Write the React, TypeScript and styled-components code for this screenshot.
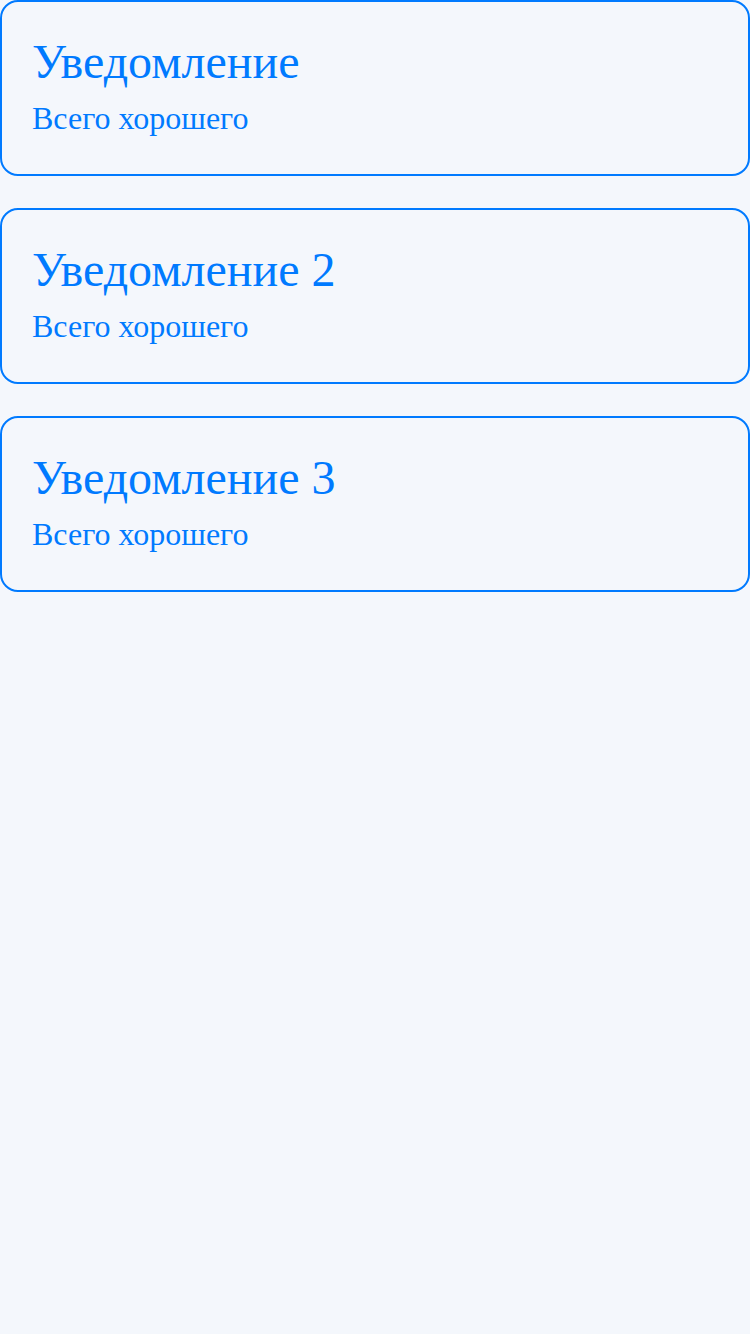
import React from "react";
import styled, { createGlobalStyle } from "styled-components";

const GlobalStyle = createGlobalStyle`
  html, body {
    margin: 0;
    padding: 0;
    background: #f4f7fc;
  }
  body {
    font-family: "Liberation Serif", "Times New Roman", serif;
    min-height: 1334px;
  }
`;

const List = styled.div`
  display: flex;
  flex-direction: column;
  gap: 32px;
  width: 750px;
`;

const Card = styled.div`
  box-sizing: border-box;
  height: 176px;
  border: 2px solid #007aff;
  border-radius: 18px;
  padding: 33px 30px 0;
  display: flex;
  flex-direction: column;
  gap: 13px;
`;

const Title = styled.h2`
  margin: 0;
  font-family: "Liberation Serif", "Times New Roman", serif;
  font-weight: 400;
  font-size: 48px;
  line-height: 53px;
  color: #007aff;
`;

const Text = styled.p`
  margin: 0;
  font-family: "Liberation Serif", "Times New Roman", serif;
  font-size: 32px;
  line-height: 35px;
  color: #007aff;
`;

const items = [
  { title: "Уведомление", text: "Всего хорошего" },
  { title: "Уведомление 2", text: "Всего хорошего" },
  { title: "Уведомление 3", text: "Всего хорошего" },
];

export default function App() {
  return (
    <>
      <GlobalStyle />
      <List>
        {items.map((it) => (
          <Card key={it.title}>
            <Title>{it.title}</Title>
            <Text>{it.text}</Text>
          </Card>
        ))}
      </List>
    </>
  );
}
